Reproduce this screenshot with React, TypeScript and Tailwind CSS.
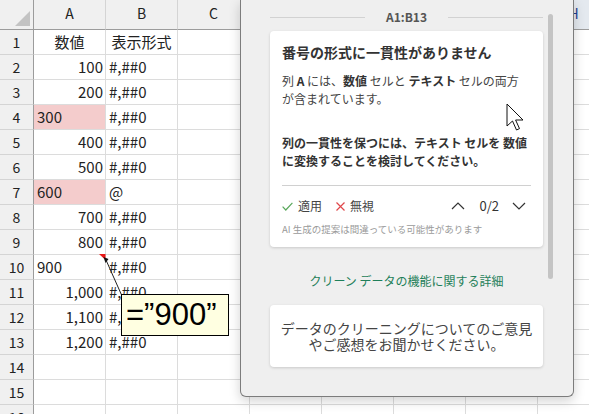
import React from "react";

type Row = { a: string; b: string; aLeft?: boolean; pink?: boolean; head?: boolean };

const rows: Row[] = [
  { a: "数値", b: "表示形式", head: true },
  { a: "100", b: "#,##0" },
  { a: "200", b: "#,##0" },
  { a: "300", b: "#,##0", aLeft: true, pink: true },
  { a: "400", b: "#,##0" },
  { a: "500", b: "#,##0" },
  { a: "600", b: "@", aLeft: true, pink: true },
  { a: "700", b: "#,##0" },
  { a: "800", b: "#,##0" },
  { a: "900", b: "#,##0", aLeft: true },
  { a: "1,000", b: "#,##0" },
  { a: "1,100", b: "#,##0" },
  { a: "1,200", b: "#,##0" },
  { a: "", b: "" },
  { a: "", b: "" },
  { a: "", b: "" },
];

const extraCols = ["C", "D", "E", "F", "G", "H"];

function Sheet() {
  return (
    <div className="flex flex-col font-['Noto_Sans_CJK_JP',sans-serif] text-[15px] text-[#222]">
      <div className="flex h-[30px] shrink-0">
        <div className="relative w-[34px] shrink-0 border-r border-b border-[#9c9c9c] bg-[#f0f0f0]">
          <svg className="absolute left-[14px] top-[10px]" width="17" height="17" viewBox="0 0 17 17">
            <polygon points="1,16 16,16 16,1" fill="#c3c3c3" />
          </svg>
        </div>
        {["A", "B", ...extraCols].map((c) => (
          <div
            key={c}
            className={`w-[72px] shrink-0 border-r border-b border-r-[#d4d4d4] border-b-[#9c9c9c] text-center text-[14px] leading-[26px] ${
              c === "H" ? "bg-[#e4e9ef] text-[#1f3f8f]" : "bg-[#f0f0f0]"
            }`}
          >
            {c}
          </div>
        ))}
      </div>
      {rows.map((r, i) => (
        <div key={i} className="flex h-[25px] shrink-0">
          <div className="w-[34px] shrink-0 border-r border-b border-r-[#9c9c9c] border-b-[#d4d4d4] bg-[#f0f0f0] text-center text-[14px] leading-[24px]">
            {i + 1}
          </div>
          <div
            className={`w-[72px] shrink-0 border-r border-b border-[#dcdcdc] leading-[24px] ${
              r.head ? "text-center" : r.aLeft ? "pl-[3px] text-left" : "pr-[2px] text-right"
            } ${r.pink ? "bg-[#f4cccc]" : "bg-white"}`}
          >
            {r.a}
          </div>
          <div
            className={`w-[72px] shrink-0 border-r border-b border-[#dcdcdc] bg-white leading-[24px] ${
              r.head ? "text-center" : "pl-[3px]"
            }`}
          >
            {r.b}
          </div>
          {extraCols.map((c) => (
            <div key={c} className="w-[72px] shrink-0 border-r border-b border-[#dcdcdc] bg-white" />
          ))}
        </div>
      ))}
    </div>
  );
}

function Chevron({ up }: { up?: boolean }) {
  return (
    <svg width="14" height="8" viewBox="0 0 14 8">
      <polyline
        points={up ? "1,7 7,1 13,7" : "1,1 7,7 13,1"}
        fill="none"
        stroke="#333"
        strokeWidth="1.2"
      />
    </svg>
  );
}

function Panel() {
  return (
    <div className="absolute left-[240px] top-0 flex h-[397px] w-[334px] rounded-b-[6px] border border-t-0 border-[#7c7c7c] bg-[#efefef] pl-[29px] shadow-[0_4px_12px_rgba(0,0,0,0.18)] font-['Noto_Sans_CJK_JP',sans-serif]">
      <div className="flex w-[273px] shrink-0 flex-col">
        <div className="mt-[10px] flex h-[14px] items-center gap-[21px]">
          <div className="h-px flex-1 bg-[#d2d2d2]" />
          <span className="text-[12px] font-semibold leading-[14px] text-[#555]">A1:B13</span>
          <div className="h-px flex-1 bg-[#d2d2d2]" />
        </div>
        <div className="mt-[7px] flex h-[216px] flex-col rounded-[4px] bg-white px-3 pt-[11px] shadow-[0_1px_3px_rgba(0,0,0,0.16)]">
          <div className="text-[14px] font-bold leading-[20px] text-[#333]">番号の形式に一貫性がありません</div>
          <p className="mt-[10px] text-[12px] leading-[18px] text-[#444]">
            列 <b className="text-[#333]">A</b> には、<b className="text-[#333]">数値</b> セルと{" "}
            <b className="text-[#333]">テキスト</b> セルの両方
            <br />
            が含まれています。
          </p>
          <p className="mt-[26px] text-[12px] font-bold leading-[18px] text-[#333]">
            列の一貫性を保つには、テキスト セルを 数値に変換することを検討してください。
          </p>
          <div className="mt-[15px] h-px bg-[#d0d0d0]" />
          <div className="mt-[10px] flex h-[20px] items-center text-[12px] text-[#444]">
            <svg width="11" height="9" viewBox="0 0 11 9">
              <polyline points="0.6,4.6 3.8,8 10.4,0.8" fill="none" stroke="#5aa85c" strokeWidth="1.2" />
            </svg>
            <span className="ml-[5px]">適用</span>
            <svg className="ml-[14px]" width="9" height="9" viewBox="0 0 9 9">
              <path d="M0.5 0.5 L8.5 8.5 M8.5 0.5 L0.5 8.5" stroke="#e0484b" strokeWidth="1.2" />
            </svg>
            <span className="ml-[5px]">無視</span>
            <div className="ml-auto mr-[5px] flex items-center">
              <Chevron up />
              <span className="ml-[14px] mr-[13px] text-[13px] text-[#333]">0/2</span>
              <Chevron />
            </div>
          </div>
          <div className="mt-[6px] text-[9.5px] leading-[14px] text-[#9a9a9a]">AI 生成の提案は間違っている可能性があります</div>
        </div>
        <div className="mt-[26px] text-center text-[12px] leading-[16px] text-[#1f7f5a]">クリーン データの機能に関する詳細</div>
        <div className="mt-[16px] flex h-[62px] items-center justify-center rounded-[4px] bg-white text-center text-[14px] leading-[16px] text-[#444] shadow-[0_1px_3px_rgba(0,0,0,0.16)]">
          データのクリーニングについてのご意見
          <br />
          やご感想をお聞かせください。
        </div>
      </div>
      <div className="ml-[5px] mt-[14px] h-[265px] w-[5px] rounded-full bg-[#c4c4c4]" />
      <svg className="absolute left-[265px] top-[103px]" width="20" height="30" viewBox="0 0 20 30">
        <path
          d="M1 1 L1 23 L6.5 18 L10.5 27 L13.5 25.6 L9.6 17 L17 17 Z"
          fill="white"
          stroke="#111"
          strokeWidth="1"
          strokeLinejoin="round"
        />
      </svg>
    </div>
  );
}

export default function App() {
  return (
    <div className="relative h-[414px] w-[589px] overflow-hidden bg-white">
      <Sheet />
      <svg className="absolute left-0 top-0" width="589" height="414" viewBox="0 0 589 414">
        <polygon points="99,254 105.5,254 105.5,260" fill="#e81818" />
        <line x1="106" y1="260" x2="122" y2="296" stroke="#222" strokeWidth="1" />
        <polygon points="103.5,257 108.5,259 105.5,263" fill="#111" />
      </svg>
      <div className="absolute left-[121px] top-[294px] h-[42px] w-[108px] border border-black bg-[#ffffe1] pl-[4px] font-['Liberation_Sans',Arial,sans-serif] text-[31px] leading-[40px] text-black">
        =”900”
      </div>
      <Panel />
    </div>
  );
}
